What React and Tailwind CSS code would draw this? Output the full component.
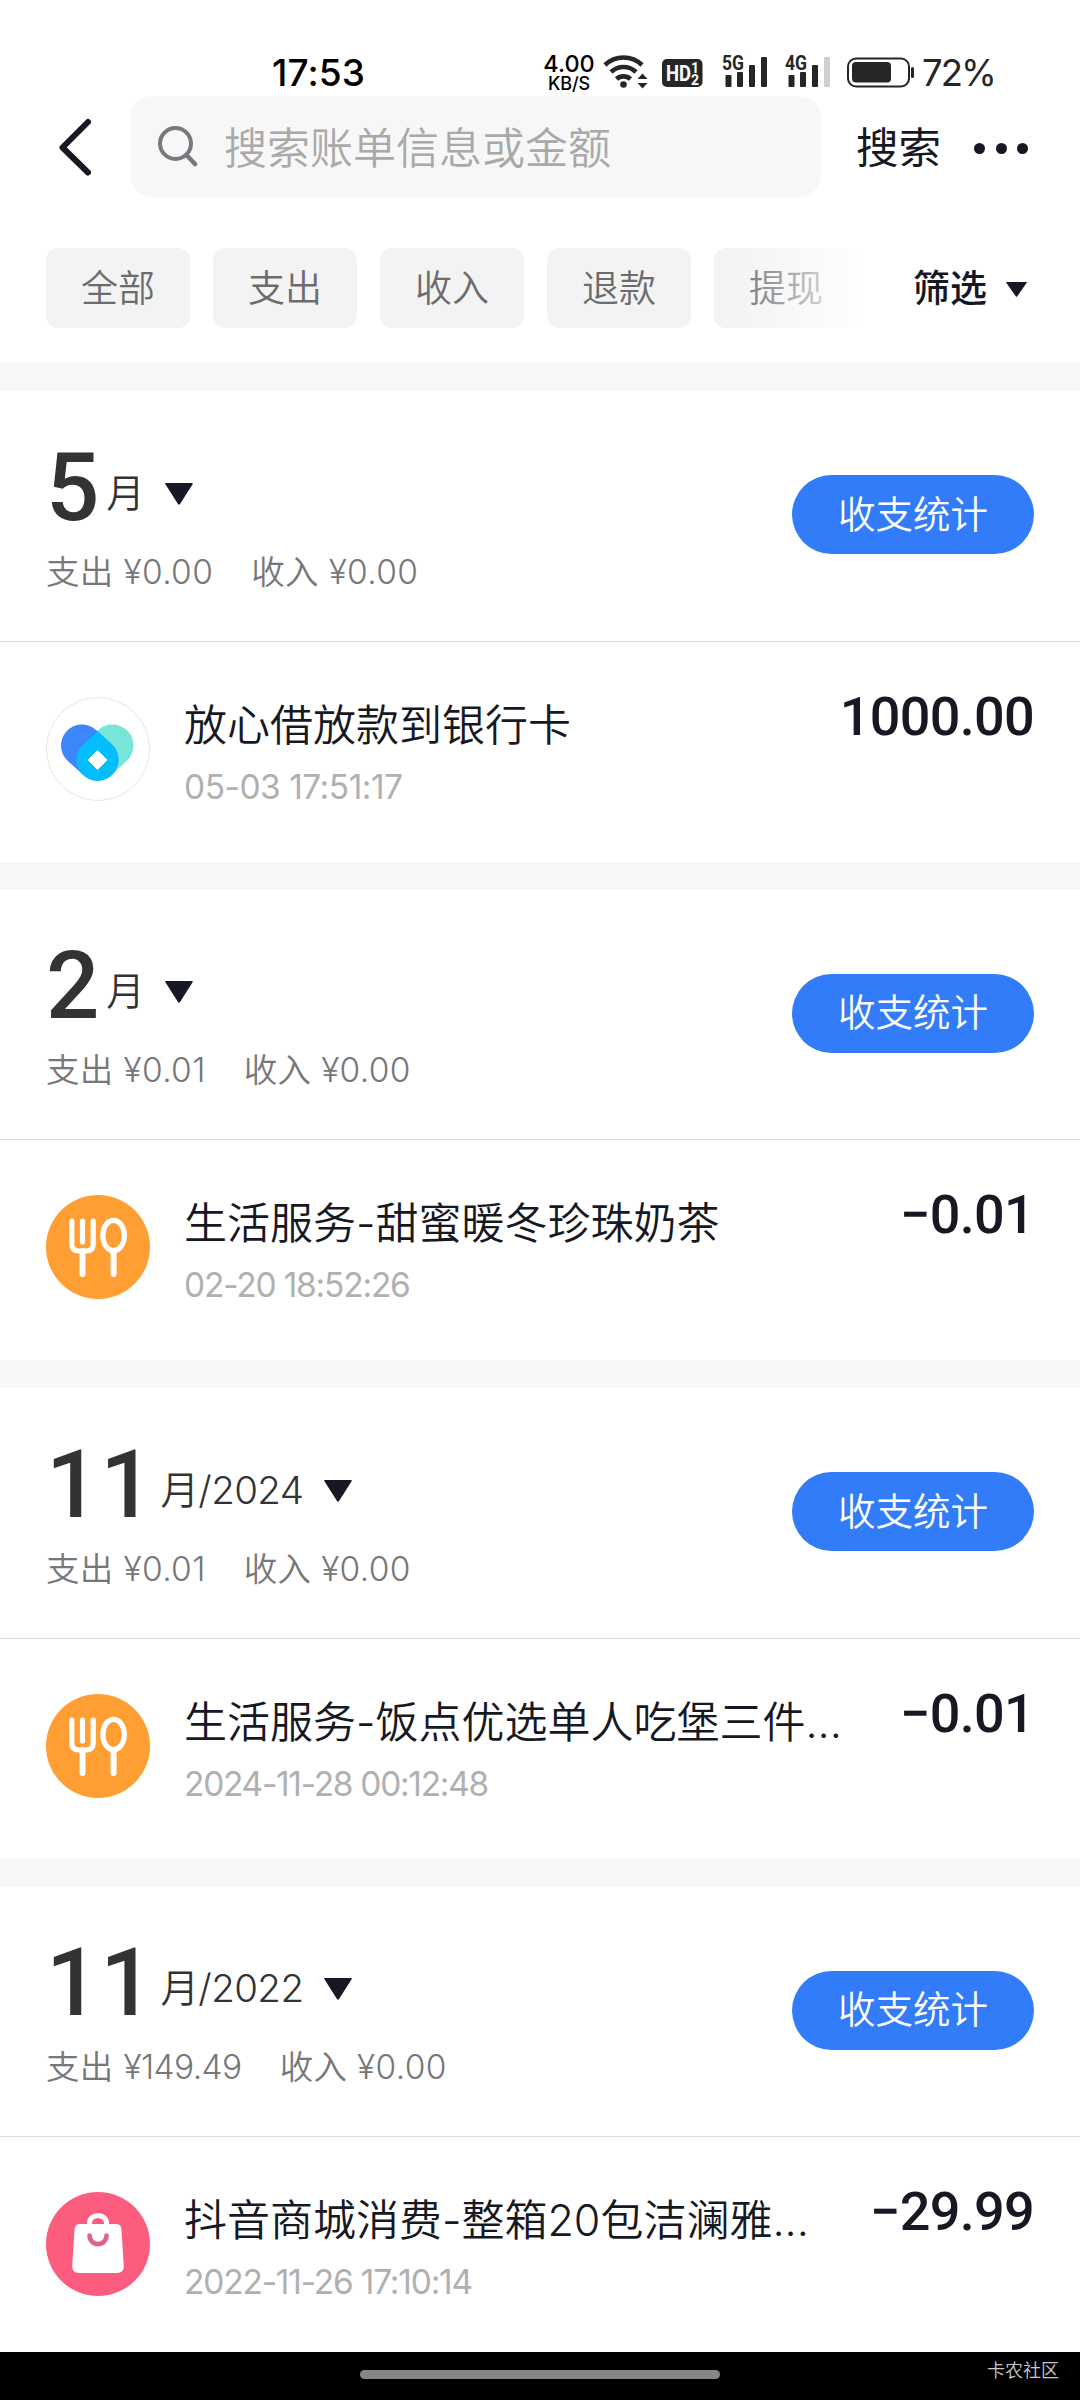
import React from 'react';

const months = [
  {
    month: '5',
    suffix: '月',
    out: '¥0.00',
    income: '¥0.00',
    item: { icon: 'loan', title: '放心借放款到银行卡', time: '05-03 17:51:17', tracking: 'tracking-[-0.5px]', amount: '1000.00' },
  },
  {
    month: '2',
    suffix: '月',
    out: '¥0.01',
    income: '¥0.00',
    item: { icon: 'food', title: '生活服务-甜蜜暖冬珍珠奶茶', time: '02-20 18:52:26', tracking: 'tracking-[-1.2px]', amount: '−0.01' },
  },
  {
    month: '11',
    suffix: '月/2024',
    out: '¥0.01',
    income: '¥0.00',
    item: { icon: 'food', title: '生活服务-饭点优选单人吃堡三件...', time: '2024-11-28 00:12:48', tracking: 'tracking-[-1.3px]', amount: '−0.01' },
  },
  {
    month: '11',
    suffix: '月/2022',
    out: '¥149.49',
    income: '¥0.00',
    outTracking: 'tracking-[-0.6px]',
    item: { icon: 'bag', title: '抖音商城消费-整箱20包洁澜雅...', time: '2022-11-26 17:10:14', tracking: 'tracking-[-1.2px]', amount: '−29.99' },
  },
];

const chips = ['全部', '支出', '收入', '退款', '提现'];

const Triangle = ({ className }) => (
  <svg className={className} viewBox="0 0 27 21" preserveAspectRatio="none">
    <path d="M1 0h25q1.500 0 .6 1.200L14.500 20q-1 1.400-2 0L.4 1.200Q-.5 0 1 0z" fill="#161823" />
  </svg>
);

const LoanIcon = () => (
  <svg className="size-[104px] shrink-0" viewBox="0 0 104 104">
    <circle cx="52" cy="52" r="51.500" fill="#fff" stroke="#e6e6e6" />
    <path d="M66.500 48.500L51.500 62.500" stroke="#78e5db" strokeWidth="42" strokeLinecap="round" />
    <path d="M36 48.500L51.500 62.500" stroke="#3e86fb" strokeWidth="42" strokeLinecap="round" />
    <path d="M51.500 34.500l14.300 12.900a21 21 0 1 1-28.600 0z" fill="#04bdfd" />
    <path d="M51.500 53.500l9.500 9.500-9.500 9.500L42 63z" fill="#fff" stroke="#fff" strokeLinejoin="round" />
  </svg>
);

const FoodIcon = () => (
  <svg className="size-[104px] shrink-0" viewBox="0 0 104 104" fill="none">
    <circle cx="52" cy="52" r="52" fill="#ff9f33" />
    <g stroke="#fff" strokeWidth="5.200" strokeLinecap="round">
      <path d="M25.800 26v23q0 7 7 7h7.400q7 0 7-7V26" />
      <path d="M36.500 26v21" />
      <path d="M36.500 56v23" strokeWidth="6" />
      <ellipse cx="67.600" cy="40.500" rx="10.800" ry="15.200" />
      <path d="M67.600 57v22" strokeWidth="6" />
    </g>
  </svg>
);

const BagIcon = () => (
  <svg className="size-[104px] shrink-0" viewBox="0 0 104 104" fill="none">
    <circle cx="52" cy="52" r="52" fill="#fc5d7f" />
    <path d="M43.500 34v-3a8.500 7.500 0 0 1 17 0v3" stroke="#fff" strokeWidth="5" />
    <path d="M34 32h36q5 0 5.400 5l2.400 37q.3 7-6.800 7H33q-7 0-6.800-7l2.400-37q.4-5 5.400-5z" fill="#fff" />
    <path d="M43.500 43.500a8.500 8.500 0 0 0 17 0" stroke="#e0638a" strokeWidth="4.600" strokeLinecap="round" />
  </svg>
);

const icons = { loan: LoanIcon, food: FoodIcon, bag: BagIcon };

const Signal = ({ label, weak }) => (
  <svg className="-mt-[4px] h-[38px] w-[48px]" viewBox="0 -4 48 38" fill="#262626">
    <text x="0" y="16" fontSize="20" fontWeight="700" textLength="22" lengthAdjust="spacingAndGlyphs" fontFamily="Roboto, sans-serif">
      {label}
    </text>
    <rect x="3.500" y="21" width="6" height="12" rx="1" />
    <rect x="15" y="18" width="6" height="15" rx="1" />
    <rect x="27" y="11" width="6" height="22" rx="1" />
    <rect x="39" y="3" width="6" height="30" rx="1" fill={weak ? '#d0d0d0' : '#262626'} />
  </svg>
);

const StatusBar = () => (
  <div className="flex h-[96px] pt-[54px] text-black">
    <span className="ml-[272px] w-[272px] text-[37px] leading-[38px] font-medium tracking-[0.1px]">17:53</span>
    <div className="-mt-[2px] flex w-[50px] flex-col items-center font-medium">
      <span className="text-[23.500px] leading-[23px]">4.00</span>
      <span className="text-[18px] leading-[18px] tracking-[-0.1px]">KB/S</span>
    </div>
    <svg className="ml-[9px] h-[36px] w-[46px]" viewBox="0 0 46 36" fill="none">
      <g stroke="#262626" strokeWidth="4.600">
        <path d="M2 11a26.500 26.500 0 0 1 37 0" />
        <path d="M8 18a18 18 0 0 1 25 0" />
        <path d="M13.500 25a10.500 10.500 0 0 1 14 0" />
      </g>
      <circle cx="20.500" cy="30.500" r="3.300" fill="#262626" />
      <path d="M39.500 19.500l5 5.500h-10zM39.500 34.500l5-5.500h-10z" fill="#262626" />
    </svg>
    <svg className="ml-[13px] h-[34px] w-[41px]" viewBox="0 0 41 34">
      <rect x="0" y="5" width="40.500" height="28" rx="5" fill="#262626" />
      <g fill="#fff" fontFamily="Roboto, sans-serif" fontWeight="700">
        <text x="4" y="27" fontSize="22.500" textLength="25" lengthAdjust="spacingAndGlyphs">HD</text>
        <text x="29" y="18.500" fontSize="14">1</text>
        <text x="29" y="30.500" fontSize="14">2</text>
      </g>
    </svg>
    <div className="ml-[19px] flex gap-[15px]">
      <Signal label="5G" />
      <Signal label="4G" weak />
    </div>
    <svg className="ml-[14px] h-[36px] w-[68px]" viewBox="0 0 68 36" fill="#262626">
      <rect x="1" y="4.500" width="61" height="28" rx="8" fill="none" stroke="#262626" strokeWidth="2" />
      <rect x="5" y="8" width="39" height="20.500" rx="4" />
      <rect x="64" y="13" width="3" height="11" rx="1.500" />
    </svg>
    <span className="ml-[7px] text-[36.500px] leading-[38px] tracking-[-2px] text-[#262626]">72%</span>
  </div>
);

const SearchBar = () => (
  <div className="flex h-[101px] items-center">
    <svg className="ml-[57px] h-[60px] w-[36px]" viewBox="0 0 36 60" fill="none">
      <path d="M31 5L5.500 30.500l25.500 25" stroke="#161823" strokeWidth="6" strokeLinecap="round" strokeLinejoin="round" />
    </svg>
    <div className="ml-[37px] flex h-full w-[691px] items-center rounded-[22px] bg-[#f7f7f7]">
      <svg className="ml-[27px] size-[44px]" viewBox="0 0 44 44" fill="none" stroke="#78797e">
        <circle cx="18.500" cy="18.500" r="15.500" strokeWidth="4" />
        <path d="M29.500 30l8.500 9" strokeWidth="4.500" strokeLinecap="round" />
      </svg>
      <span className="mt-[2px] ml-[23px] text-[43px] leading-[60px] font-[350] text-[#a9a9aa]">搜索账单信息或金额</span>
    </div>
    <span className="mt-[2px] ml-[35px] text-[42.500px] leading-[60px] text-[#161823]">搜索</span>
    <div className="mt-[3px] ml-[33px] flex gap-[10.500px]">
      <i className="size-[11px] rounded-full bg-[#161823]" />
      <i className="size-[11px] rounded-full bg-[#161823]" />
      <i className="size-[11px] rounded-full bg-[#161823]" />
    </div>
  </div>
);

const FilterBar = () => (
  <div className="flex h-[166px] items-start pt-[51px] pl-[46px]">
    <div className="relative flex w-[834px] gap-[23px] overflow-hidden">
      {chips.map((chip) => (
        <button
          key={chip}
          type="button"
          className="h-[80px] w-[144px] shrink-0 rounded-[12px] bg-[#f3f3f3] pt-[2px] text-[37px] leading-[78px] font-[350] text-[#6c6c6f]"
        >
          {chip}
        </button>
      ))}
      <div className="absolute inset-y-0 right-[10px] w-[140px] bg-gradient-to-r from-white/0 to-white" />
    </div>
    <div className="flex h-[80px] items-center">
      <span className="mt-[2px] ml-[33px] text-[37px] leading-[60px] font-medium text-[#161823]">筛选</span>
      <Triangle className="mt-[2px] ml-[19px] h-[15px] w-[21px]" />
    </div>
  </div>
);

const MonthSection = ({ data }) => {
  const Icon = icons[data.item.icon];
  return (
    <section className="border-t-[28px] border-[#f7f7f7] bg-white">
      <div className="flex h-[250.500px] items-start justify-between border-b-[1.500px] border-[#dededf] pr-[46px] pl-[46px]">
        <div className="pt-[52.500px]">
          <div className="flex h-[88px] items-start text-[#333]">
            <span className="font-['Roboto',sans-serif] text-[94px] leading-[88px] font-medium tracking-[0.8px]">{data.month}</span>
            <span className="ml-[6px] pt-[17px] text-[38.500px] leading-[64px] font-[350] tracking-[-0.6px]">{data.suffix}</span>
            <Triangle className="mt-[39px] ml-[21px] h-[22px] w-[28px]" />
          </div>
          <div className="mt-[15px] flex gap-[38px] text-[33.500px] leading-[50px] font-[350] tracking-[0.35px] text-[#777779]">
            <span>
              支出 <span className={data.outTracking}>{data.out}</span>
            </span>
            <span>收入 {data.income}</span>
          </div>
        </div>
        <button type="button" className="mt-[84px] h-[79px] w-[242px] rounded-full bg-[#327bf9] text-[37.500px] leading-[78px] font-[350] text-white">
          收支统计
        </button>
      </div>
      <div className="flex h-[220px] items-start pt-[55px] pl-[46px] pr-[46px]">
        <Icon />
        <div className="ml-[34px] flex-1">
          <div className="text-[43px] leading-[57px] font-[350] whitespace-nowrap text-[#161823]">{data.item.title}</div>
          <div className={`mt-[8px] text-[33.500px] leading-[50px] text-[#b0b0b1] ${data.item.tracking}`}>{data.item.time}</div>
        </div>
        <span className="font-['Roboto',sans-serif] text-[54px] leading-[40px] font-medium tracking-[-0.7px] text-[#161823]">{data.item.amount}</span>
      </div>
    </section>
  );
};

const App = () => (
  <div className="flex h-[2400px] w-[1080px] flex-col overflow-hidden bg-white font-['Inter','Noto_Sans_CJK_SC',sans-serif]">
    <StatusBar />
    <SearchBar />
    <FilterBar />
    <main className="min-h-0 flex-1 overflow-hidden">
      {months.map((data, i) => (
        <MonthSection key={i} data={data} />
      ))}
    </main>
    <footer className="grid h-[48px] shrink-0 grid-cols-3 items-center bg-black">
      <div className="col-start-2 -mt-[3px] h-[9px] rounded-full bg-[#868686]" />
      <span className="pr-[21px] pb-[11px] text-right text-[18px] leading-[24px] font-[350] text-[#c8c8c8]">卡农社区</span>
    </footer>
  </div>
);

export default App;
